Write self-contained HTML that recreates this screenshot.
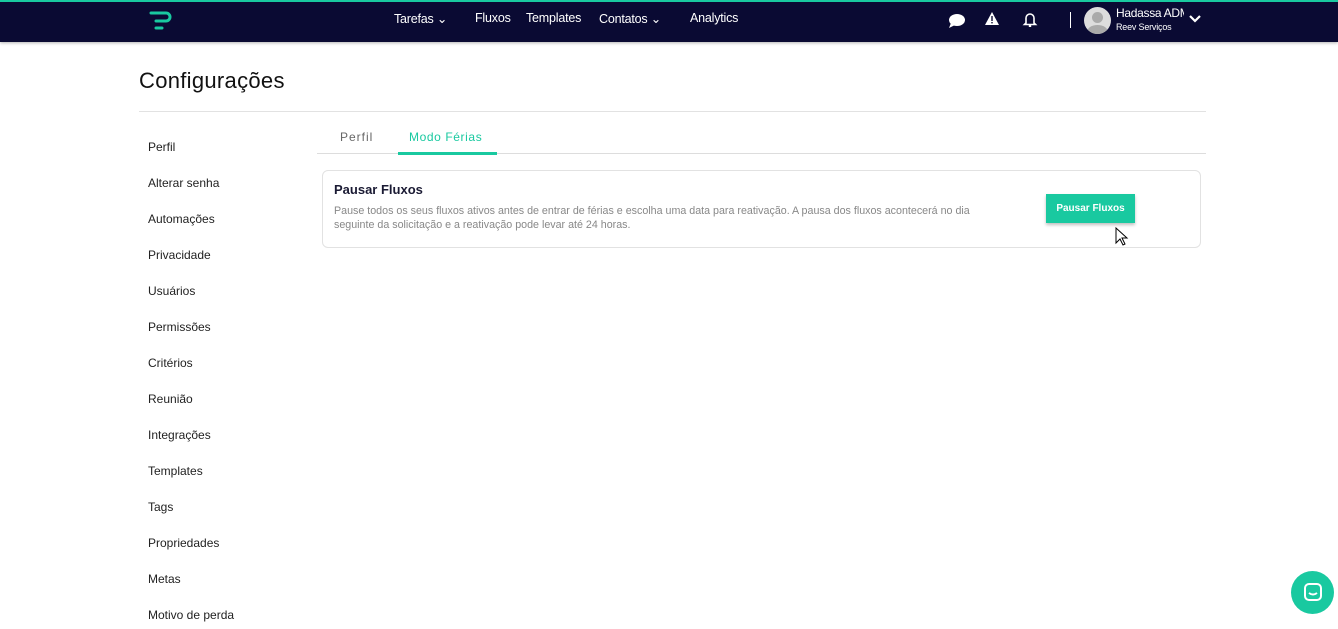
<!DOCTYPE html>
<html><head><meta charset="utf-8"><style>
*{margin:0;padding:0;box-sizing:border-box}
body{width:1338px;height:629px;overflow:hidden;background:#fff;font-family:"Liberation Sans",sans-serif;position:relative}
.top{position:absolute;left:0;top:0;width:1338px;height:42px;background:#0a0a33;border-top:2px solid #19c9a0;box-shadow:0 1px 3px rgba(0,0,0,.3)}
.nav{position:absolute;top:9px;color:#fff;font-size:12.5px;letter-spacing:-.2px}
.side{position:absolute;left:148px;font-size:12px;color:#222}
h1{position:absolute;left:139px;top:68px;font-size:22px;font-weight:normal;color:#111;letter-spacing:.3px}
</style></head><body>
<div class="top">
<svg style="position:absolute;left:148px;top:8px" width="26" height="22" viewBox="0 0 26 22"><path d="M3 3h15a4 4 0 0 1 0 8H8" stroke="#19c9a0" stroke-width="3" fill="none" stroke-linecap="round"/><path d="M8 18h6" stroke="#19c9a0" stroke-width="3" stroke-linecap="round"/></svg>
<span class="nav" style="left:394px">Tarefas ⌄</span>
<span class="nav" style="left:475px">Fluxos</span>
<span class="nav" style="left:526px">Templates</span>
<span class="nav" style="left:599px">Contatos ⌄</span>
<span class="nav" style="left:690px">Analytics</span>
<svg style="position:absolute;left:948px;top:11px" width="18" height="16"><ellipse cx="9" cy="7" rx="8" ry="6" fill="#fff"/><path d="M3 10l-2 5 6-3z" fill="#fff"/></svg>
<svg style="position:absolute;left:984px;top:9px" width="16" height="15"><path d="M8 1L15 14H1z" fill="#fff"/><rect x="7.3" y="5" width="1.4" height="5" fill="#0a0a33"/><rect x="7.3" y="11" width="1.4" height="1.4" fill="#0a0a33"/></svg>
<svg style="position:absolute;left:1022px;top:9px" width="16" height="16"><path d="M4 12V7a4 4 0 0 1 8 0v5l1.5 1.5h-11z" fill="none" stroke="#fff" stroke-width="1.6"/><circle cx="8" cy="15" r="1.3" fill="#fff"/></svg>
<div style="position:absolute;left:1070px;top:10px;width:1px;height:16px;background:#fff"></div>
<div style="position:absolute;left:1084px;top:5px;width:27px;height:27px;border-radius:50%;background:#ddd;overflow:hidden"><div style="position:absolute;left:8px;top:5px;width:11px;height:11px;border-radius:50%;background:#aaa"></div><div style="position:absolute;left:3px;top:18px;width:21px;height:14px;border-radius:50%;background:#aaa"></div></div>
<div style="position:absolute;left:1116px;top:4px;width:68px;overflow:hidden;white-space:nowrap;color:#fff;font-size:12px;letter-spacing:-.3px">Hadassa ADM</div>
<span style="position:absolute;left:1116px;top:20px;color:#fff;font-size:9px;letter-spacing:-.2px">Reev Serviços</span>
<svg style="position:absolute;left:1188px;top:12px" width="14" height="10"><path d="M2 2l5 5 5-5" stroke="#fff" stroke-width="2.2" fill="none"/></svg>
</div>
<h1>Configurações</h1>
<div style="position:absolute;left:139px;top:111px;width:1067px;height:1px;background:#e2e2e2"></div>
<div class="side" style="top:140px">Perfil</div>
<div class="side" style="top:176px">Alterar senha</div>
<div class="side" style="top:212px">Automações</div>
<div class="side" style="top:248px">Privacidade</div>
<div class="side" style="top:284px">Usuários</div>
<div class="side" style="top:320px">Permissões</div>
<div class="side" style="top:356px">Critérios</div>
<div class="side" style="top:392px">Reunião</div>
<div class="side" style="top:428px">Integrações</div>
<div class="side" style="top:464px">Templates</div>
<div class="side" style="top:500px">Tags</div>
<div class="side" style="top:536px">Propriedades</div>
<div class="side" style="top:572px">Metas</div>
<div class="side" style="top:608px">Motivo de perda</div>
<span style="position:absolute;left:340px;top:130px;font-size:12px;color:#666;letter-spacing:1px">Perfil</span>
<span style="position:absolute;left:409px;top:130px;font-size:12px;color:#19c9a0;letter-spacing:.6px">Modo Férias</span>
<div style="position:absolute;left:317px;top:153px;width:889px;height:1px;background:#ddd"></div>
<div style="position:absolute;left:398px;top:152px;width:99px;height:3px;background:#19c9a0"></div>
<div style="position:absolute;left:322px;top:170px;width:879px;height:78px;border:1px solid #e2e2e2;border-radius:6px"></div>
<span style="position:absolute;left:334px;top:182px;font-size:13px;font-weight:bold;color:#1a1a33">Pausar Fluxos</span>
<div style="position:absolute;left:334px;top:204px;width:650px;font-size:10.7px;line-height:14px;color:#888">Pause todos os seus fluxos ativos antes de entrar de férias e escolha uma data para reativação. A pausa dos fluxos acontecerá no dia seguinte da solicitação e a reativação pode levar até 24 horas.</div>
<div style="position:absolute;left:1046px;top:194px;width:89px;height:29px;background:#19c9a0;color:#fff;font-size:10px;font-weight:bold;text-align:center;line-height:29px;box-shadow:0 2px 3px rgba(0,0,0,.25)">Pausar Fluxos</div>
<svg style="position:absolute;left:1115px;top:227px" width="14" height="20"><path d="M1 1v15l4-4 3 6 2-1-3-6h5z" fill="#fff" stroke="#000" stroke-width="1"/></svg>
<div style="position:absolute;left:1291px;top:571px;width:43px;height:43px;border-radius:50%;background:#19c9a0"><svg style="position:absolute;left:12px;top:11px" width="20" height="20"><rect x="2" y="2" width="16" height="16" rx="4" fill="none" stroke="#fff" stroke-width="2"/><path d="M6 11q4 3 8 0" stroke="#fff" stroke-width="2" fill="none"/></svg></div>
</body></html>
